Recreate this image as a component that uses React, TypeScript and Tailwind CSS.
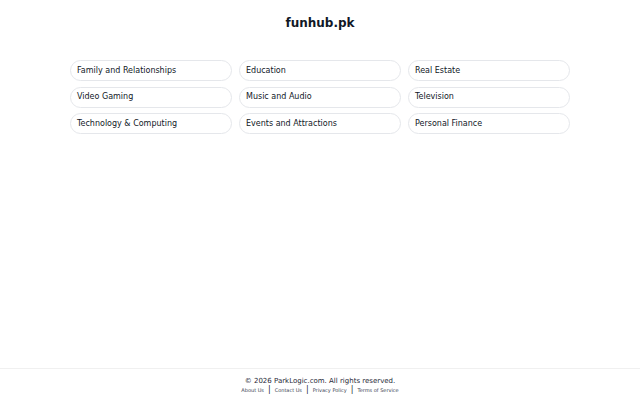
const categories = [
  'Family and Relationships',
  'Education',
  'Real Estate',
  'Video Gaming',
  'Music and Audio',
  'Television',
  'Technology & Computing',
  'Events and Attractions',
  'Personal Finance',
];

const links = ['About Us', 'Contact Us', 'Privacy Policy', 'Terms of Service'];

export default function App() {
  return (
    <div className="min-h-screen flex flex-col bg-white text-[#111827] font-['DejaVu_Sans',sans-serif]">
      <main className="flex-1">
        <h1 className="text-[12px] font-bold text-center pt-[15px] pb-[28px] leading-[17px]">funhub.pk</h1>
        <div className="w-[500px] mx-auto grid grid-cols-3 gap-x-[7px] gap-y-[5.5px]">
          {categories.map((c) => (
            <a
              key={c}
              href="#"
              className="h-[21px] flex items-center px-[6px] rounded-full border border-[#e5e7eb] text-[8px] text-[#111827]"
            >
              {c}
            </a>
          ))}
        </div>
      </main>
      <footer className="border-t border-[#f0f0f0] pt-[7px] pb-[6px] text-center">
        <p className="text-[7px] leading-[10px] text-[#1f2937]">© 2026 ParkLogic.com. All rights reserved.</p>
        <div className="flex justify-center items-center gap-[4px] text-[5px] leading-[8px] text-[#374151]">
          {links.map((l, i) => (
            <span key={l} className="flex items-center gap-[4px]">
              {i > 0 && <span className="text-[8px] text-[#1f2937]">|</span>}
              <a href="#">{l}</a>
            </span>
          ))}
        </div>
      </footer>
    </div>
  );
}
